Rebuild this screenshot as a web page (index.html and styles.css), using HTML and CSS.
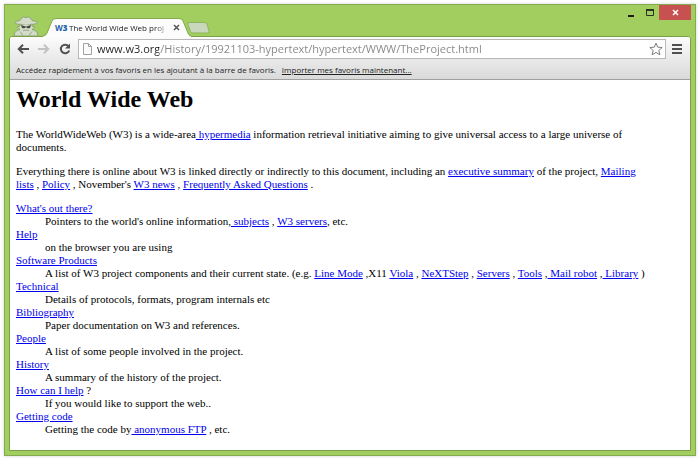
FILE: index.html
```html
<!DOCTYPE html>
<html lang="en">
<head>
  <meta charset="UTF-8">
  <title>The World Wide Web project</title>
  <meta name="viewport" content="width=device-width, initial-scale=1">
  <link rel="stylesheet" href="styles.css">
</head>
<body>
  <div class="window">

    <!-- Title bar: incognito figure, tabs, window buttons -->
    <div class="titlebar" lang="fr">
      <svg class="spy" width="26" height="20" viewBox="0 0 26 20" aria-hidden="true">
        <path d="M1 20Q1 16 4 14.500L7 13.500L4 11L7 10L7 8.500Q2 8 1.500 6.500Q3 5 7 4.500L9 1.500Q10 0.500 13 1.500Q16 0.500 17 1.500L19 4.500Q23 5 24.500 6.500Q24 8 19 8.500L19 10L22 11L19 13.500L22 14.500Q25 16 25 20Z" fill="#d3dcc8" stroke="#8fa676"/>
        <path d="M7 7.500Q13 9.500 19 7.500L19 9.500Q13 8 7 9.500Z" fill="#9fae90"/>
        <path d="M8 9L12.500 10.500L13.500 10.500L18 9L17 12Q14.500 13 13 11Q11.500 13 9 12Z" fill="#424b3b"/>
        <path d="M10 14.500Q13 13.500 16 14.500M7 15.500L10 19.500M19 15.500L16 19.500" fill="none" stroke="#98a68a"/>
      </svg>
      <div class="tab">
        <svg class="tab-shape" width="148" height="19" viewBox="0 0 148 19" aria-hidden="true">
          <path d="M0 18.500Q3 18 4 16L9 3Q10 0.500 13 0.500H136Q139 0.500 140 3L145 16Q146 18 148 18.500V19H0Z" fill="#fcfcfc"/>
          <path d="M0 17.500Q3 17 4 15L9 3Q10 0.500 13 0.500H136Q139 0.500 140 3L145 15Q146 17 148 17.500" fill="none" stroke="#84ab4e"/>
        </svg>
        <span class="favicon">W<b>3</b></span>
        <span class="tab-title">The World Wide Web proj</span>
        <button class="tab-close" type="button" aria-label="Fermer l'onglet">
          <svg width="7" height="7" viewBox="0 0 7 7"><path d="M1 1L6 6M6 1L1 6" stroke="#555" stroke-width="1.500"/></svg>
        </button>
      </div>
      <button class="new-tab" type="button" aria-label="Nouvel onglet">
        <svg width="23" height="12" viewBox="0 0 23 12"><path d="M2 0.500H17Q19 0.500 20 2L22 9Q22.500 11 21 11H6Q4 11 3.500 9.500L0.800 2.500Q0.500 0.500 2 0.500Z" fill="#c9d8bc" stroke="#8db45c"/></svg>
      </button>
      <div class="window-buttons">
        <button type="button" aria-label="Réduire">
          <svg width="8" height="8" viewBox="0 0 8 8"><path d="M1 7H7" stroke="#1d1d1d" stroke-width="2"/></svg>
        </button>
        <button type="button" aria-label="Agrandir">
          <svg width="8" height="8" viewBox="0 0 8 8"><path d="M0 1H8" stroke="#2b3320" stroke-width="2"/><path d="M0.500 1V6.500H7.500V1" fill="none" stroke="#2b3320"/></svg>
        </button>
        <button class="close" type="button" aria-label="Fermer">
          <svg width="7" height="7" viewBox="0 0 7 7"><path d="M1 1L6 6M6 1L1 6" stroke="#fff" stroke-width="1.500"/></svg>
        </button>
      </div>
    </div>

    <div class="frame">
      <!-- Toolbar -->
      <div class="toolbar" lang="fr">
        <button type="button" aria-label="Précédent">
          <svg width="12" height="10" viewBox="0 0 12 10"><path d="M12 5H2M6 0.800L1.800 5L6 9.200" fill="none" stroke="#505050" stroke-width="2"/></svg>
        </button>
        <button type="button" aria-label="Suivant" disabled>
          <svg width="12" height="10" viewBox="0 0 12 10"><path d="M0 5H10M6 0.800L10.200 5L6 9.200" fill="none" stroke="#c2c2c2" stroke-width="2"/></svg>
        </button>
        <button type="button" aria-label="Actualiser">
          <svg width="12" height="12" viewBox="0 0 12 12"><path d="M9.500 3.200A4.300 4.300 0 1 0 10.200 7.500" fill="none" stroke="#505050" stroke-width="2"/><path d="M11 0.500V5.500H6Z" fill="#505050"/></svg>
        </button>
        <div class="address">
          <svg width="9" height="12" viewBox="0 0 9 12" aria-hidden="true"><path d="M0.500 0.500H5.500L8.500 3.500V11.500H0.500ZM5.500 0.500V3.500H8.500" fill="#fafafa" stroke="#a0a0a0"/></svg>
          <input type="text" aria-label="Adresse" value="www.w3.org/History/19921103-hypertext/hypertext/WWW/TheProject.html">
          <button type="button" aria-label="Ajouter aux favoris">
            <svg width="14" height="14" viewBox="0 0 14 14"><path d="M7 1L8.700 5.200L13.200 5.500L9.800 8.400L10.900 12.800L7 10.400L3.100 12.800L4.200 8.400L0.800 5.500L5.300 5.200Z" fill="#fff" stroke="#7d7d7d"/></svg>
          </button>
        </div>
        <button type="button" aria-label="Menu">
          <svg width="10" height="10" viewBox="0 0 10 10"><path d="M0 1H10M0 5H10M0 9H10" stroke="#505050" stroke-width="2"/></svg>
        </button>
      </div>

      <!-- Bookmarks bar -->
      <div class="bookmarks" lang="fr">
        <span>Accédez rapidement à vos favoris en les ajoutant à la barre de favoris.</span>
        <a href="#">Importer mes favoris maintenant...</a>
      </div>

      <!-- The document itself -->
      <main>
        <h1>World Wide Web</h1>
        <p>The WorldWideWeb (W3) is a wide-area<a href="#"> hypermedia</a> information retrieval initiative aiming to give universal access to a large universe of documents.</p>
        <p>Everything there is online about W3 is linked directly or indirectly to this document, including an <a href="#">executive summary</a> of the project, <a href="#">Mailing lists</a> , <a href="#">Policy</a> , November's <a href="#">W3 news</a> , <a href="#">Frequently Asked Questions</a> .</p>
        <dl>
          <dt><a href="#">What's out there?</a></dt>
          <dd>Pointers to the world's online information,<a href="#"> subjects</a> , <a href="#">W3 servers</a>, etc.</dd>
          <dt><a href="#">Help</a></dt>
          <dd>on the browser you are using</dd>
          <dt><a href="#">Software Products</a></dt>
          <dd>A list of W3 project components and their current state. (e.g. <a href="#">Line Mode</a> ,X11 <a href="#">Viola</a> , <a href="#">NeXTStep</a> , <a href="#">Servers</a> , <a href="#">Tools</a> ,<a href="#"> Mail robot</a> ,<a href="#"> Library</a> )</dd>
          <dt><a href="#">Technical</a></dt>
          <dd>Details of protocols, formats, program internals etc</dd>
          <dt><a href="#">Bibliography</a></dt>
          <dd>Paper documentation on W3 and references.</dd>
          <dt><a href="#">People</a></dt>
          <dd>A list of some people involved in the project.</dd>
          <dt><a href="#">History</a></dt>
          <dd>A summary of the history of the project.</dd>
          <dt><a href="#">How can I help</a> ?</dt>
          <dd>If you would like to support the web..</dd>
          <dt><a href="#">Getting code</a></dt>
          <dd>Getting the code by<a href="#"> anonymous FTP</a> , etc.</dd>
        </dl>
      </main>
    </div>
  </div>
</body>
</html>
```

FILE: styles.css
```css
* { box-sizing: border-box; }

body {
  margin: 0;
  padding: 4px 4px 8px;
  min-height: 100vh;
  display: flex;
  background: #fff;
  font-family: "Open Sans", "Noto Sans", sans-serif;
}

button {
  display: flex;
  align-items: center;
  justify-content: center;
  padding: 0;
  border: 0;
  background: none;
}

.window {
  flex: 1;
  display: flex;
  flex-direction: column;
  padding: 0 4px 4px;
  border: 1px solid #84ab4e;
  background: #a2ce60;
  box-shadow: 0 0 3px #ccc;
}

/* title bar */
.titlebar {
  display: flex;
  align-items: flex-end;
  height: 31px;
}
.spy { margin-left: 4px; }
.tab {
  position: relative;
  display: flex;
  align-items: center;
  width: 148px;
  height: 18px;
  margin-left: 4px;
  padding: 0 9px 0 12px;
}
.tab-shape {
  position: absolute;
  top: 0;
  left: 0;
}
.favicon, .tab-title, .tab-close { position: relative; }
.favicon {
  width: 14px;
  color: #1c62a8;
  font-size: 8px;
  font-weight: bold;
}
.tab-title {
  flex: 1;
  white-space: nowrap;
  color: #222;
  font-size: 8px;
  -webkit-mask-image: linear-gradient(to right, #000 85%, transparent);
  mask-image: linear-gradient(to right, #000 85%, transparent);
}
.tab-close { width: 12px; height: 12px; }
.new-tab { margin: 0 0 2px -4px; position: relative; }
.window-buttons {
  display: flex;
  align-self: flex-start;
  margin-left: auto;
}
.window-buttons button { width: 19px; height: 15px; }
.window-buttons .close { width: 32px; background: #c75050; }

/* page frame */
.frame {
  flex: 1;
  display: flex;
  flex-direction: column;
  border: 1px solid #7a9f49;
  border-radius: 3px 3px 0 0;
  background: #fff;
}
.toolbar {
  display: flex;
  align-items: center;
  gap: 9px;
  padding: 2px 7px;
  border-radius: 2px 2px 0 0;
  background: linear-gradient(#fcfcfc, #e8e8e8);
}
.toolbar > button { width: 12px; }
.address {
  flex: 1;
  display: flex;
  align-items: center;
  height: 20px;
  margin: 0 -4px 0 -2px;
  padding: 0 2px 0 4px;
  border: 1px solid #b8b8b8;
  background: #fff;
}
.address input {
  flex: 1;
  min-width: 0;
  margin-left: 5px;
  padding: 0;
  border: 0;
  outline: 0;
  font: 11px/18px "Open Sans", "Noto Sans", sans-serif;
  /* host in dark, path in grey */
  color: transparent;
  background: linear-gradient(to right, #222 62px, #858585 62px);
  -webkit-background-clip: text;
  background-clip: text;
}
.bookmarks {
  display: flex;
  align-items: center;
  gap: 6px;
  height: 19px;
  padding: 0 6px 2px;
  border-bottom: 1px solid #a0a0a0;
  background: linear-gradient(#e8e8e8, #dadada);
  color: #222;
  font-size: 8px;
  white-space: nowrap;
}
.bookmarks a { color: #222; }

/* document */
main {
  padding: 7px 12px 0 6px;
  color: #000;
  font: 11px/13px "Liberation Serif", "Times New Roman", serif;
}
main a { color: #00e; }
h1 { margin: 0 0 16px; font-size: 24px; line-height: 25px; }
p { max-width: 628px; margin: 0 0 11px; }
dl { margin: 0; }
dd { margin-left: 29px; }
```
